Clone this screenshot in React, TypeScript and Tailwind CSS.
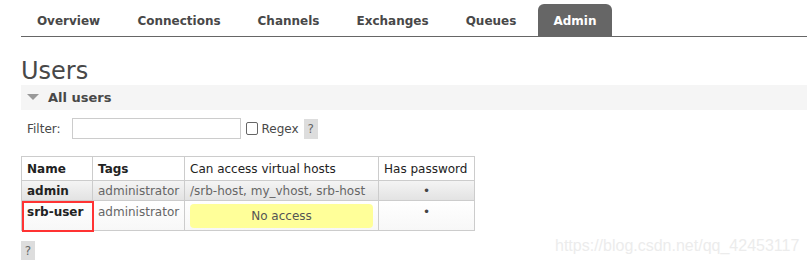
import React from "react";

const tabs = [
  { label: "Overview", w: "w-[95px]" },
  { label: "Connections", w: "w-[114px]" },
  { label: "Channels", w: "w-[93px]" },
  { label: "Exchanges", w: "w-[103px]" },
  { label: "Queues", w: "w-[82px]" },
  { label: "Admin", w: "w-[74px]", active: true },
];

export default function App() {
  return (
    <div className="relative w-[807px] h-[263px] overflow-hidden bg-white font-['DejaVu_Sans',Verdana,sans-serif] text-[12px] text-[#484848]">
      {/* top nav */}
      <div className="ml-[21px] pt-[4px] flex gap-[6px] border-b border-[#666]">
        {tabs.map((t) => (
          <div
            key={t.label}
            className={`${t.w} h-[32px] pt-[2px] flex items-center justify-center font-bold text-[12px] rounded-t-[6px] ${
              t.active ? "bg-[#666] text-white" : "text-[#484848]"
            }`}
          >
            {t.label}
          </div>
        ))}
      </div>

      <div className="ml-[21px]">
        <h1 className="text-[24px] leading-[28px] mt-[20px] text-[#484848]">Users</h1>

        {/* section header */}
        <div className="h-[25px] bg-[#f5f5f5] flex items-center pl-[6px] gap-[9px]">
          <svg width="12" height="7" viewBox="0 0 12 7">
            <polygon points="0,0 12,0 6,6" fill="#999" />
          </svg>
          <span className="font-bold text-[13px] text-[#484848]">All users</span>
        </div>

        {/* filter row */}
        <div className="mt-[8px] h-[21px] flex items-center pl-[6px]">
          <span className="text-[#484848]">Filter:</span>
          <input className="ml-[11px] w-[169px] h-[21px] border border-[#ccc] bg-white" />
          <span className="ml-[5px] w-[12px] h-[13px] border border-[#666] rounded-[2px] bg-white" />
          <span className="ml-[4px]">Regex</span>
          <span className="ml-[5px] w-[14px] h-[20px] bg-[#ddd] flex items-center justify-center text-[#666]">?</span>
        </div>

        {/* table */}
        <table className="mt-[17px] w-[453px] table-fixed border-collapse border border-[#ccc]">
          <colgroup>
            <col className="w-[71px]" />
            <col className="w-[92px]" />
            <col className="w-[194px]" />
            <col className="w-[96px]" />
          </colgroup>
          <thead>
            <tr>
              <th className="h-[24px] border border-[#ccc] text-left px-[5px] font-bold text-[#222]">Name</th>
              <th className="h-[24px] border border-[#ccc] text-left px-[5px] font-bold text-[#222]">Tags</th>
              <th className="h-[24px] border border-[#ccc] text-left px-[5px] font-normal text-[#222] whitespace-nowrap">Can access virtual hosts</th>
              <th className="h-[24px] border border-[#ccc] text-left px-[5px] font-normal text-[#222] whitespace-nowrap">Has password</th>
            </tr>
          </thead>
          <tbody>
            <tr className="bg-gradient-to-b from-[#f4f4f4] to-[#e2e2e2]">
              <td className="h-[20px] border border-[#ccc] px-[5px] font-bold text-[#222]">admin</td>
              <td className="h-[20px] border border-[#ccc] px-[5px] text-[#666]">administrator</td>
              <td className="h-[20px] border border-[#ccc] px-[5px] text-[#666] whitespace-nowrap">/srb-host, my_vhost, srb-host</td>
              <td className="h-[20px] border border-[#ccc] px-[5px] text-center text-[#444]">•</td>
            </tr>
            <tr className="bg-gradient-to-b from-white to-[#f7f7f7]">
              <td className="relative h-[30px] border border-[#ccc] px-[5px] align-top pt-[2px] font-bold text-[#222]">
                srb-user
                <span className="absolute left-0 top-0 w-[72px] h-[31px] border-2 border-[#f33]" />
              </td>
              <td className="h-[30px] border border-[#ccc] px-[5px] align-top pt-[2px] text-[#666]">administrator</td>
              <td className="h-[30px] border border-[#ccc] px-[5px] py-[2px]">
                <div className="h-[24px] rounded-[4px] bg-[#ffff99] flex items-center justify-center text-[#555]">No access</div>
              </td>
              <td className="h-[30px] border border-[#ccc] px-[5px] align-top pt-[2px] text-center text-[#444]">•</td>
            </tr>
          </tbody>
        </table>

        <div className="mt-[10px] w-[14px] h-[19px] bg-[#ddd] flex items-center justify-center text-[#666]">?</div>
      </div>

      <div className="absolute left-[555px] top-[234px] font-['Liberation_Sans',Arial,sans-serif] text-[16px] text-[#ececec]">
        https://blog.csdn.net/qq_42453117
      </div>
    </div>
  );
}
